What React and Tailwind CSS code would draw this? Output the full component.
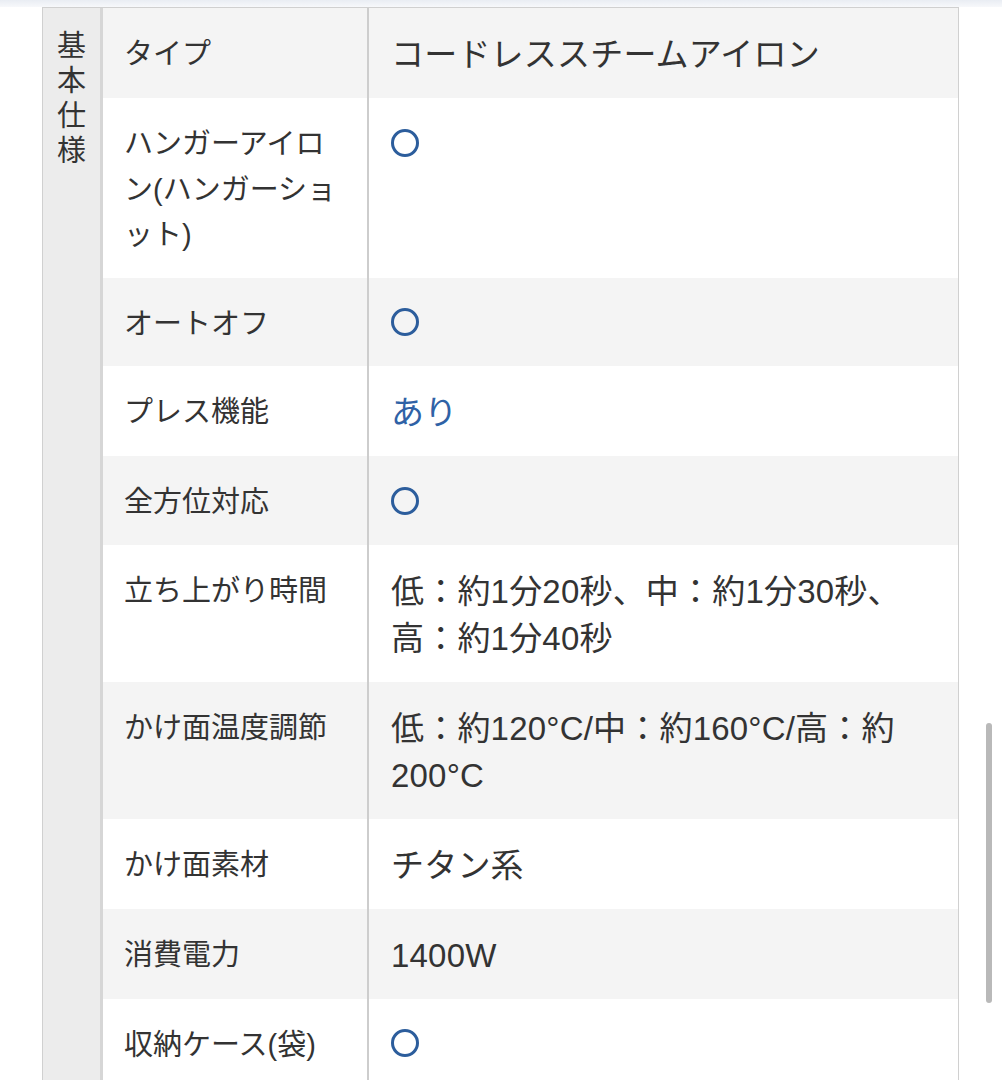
import React from "react";

const rows = [
  { label: "タイプ", value: "コードレススチームアイロン" },
  { label: ["ハンガーアイロ", "ン(ハンガーショ", "ット)"], value: "circle" },
  { label: "オートオフ", value: "circle" },
  { label: "プレス機能", value: "あり", blue: true },
  { label: "全方位対応", value: "circle" },
  { label: "立ち上がり時間", value: ["低：約1分20秒、中：約1分30秒、", "高：約1分40秒"] },
  { label: "かけ面温度調節", value: ["低：約120°C/中：約160°C/高：約", "200°C"] },
  { label: "かけ面素材", value: "チタン系" },
  { label: "消費電力", value: "1400W" },
  { label: "収納ケース(袋)", value: "circle" },
];

const Lines = ({ text }) =>
  Array.isArray(text)
    ? text.map((t, i) => <span key={i} className="block">{t}</span>)
    : text;

const Circle = () => (
  <div className="h-[43px] flex items-center">
    <span className="block w-[28px] h-[28px] rounded-full border-[3px] border-[#2c5d9c]" />
  </div>
);

const App = () => {
  return (
    <div
      className="relative min-h-[1080px] bg-white text-[#333] overflow-hidden"
      style={{ fontFamily: '"Liberation Sans", "Noto Sans CJK JP", sans-serif' }}
    >
      {/* header shadow */}
      <div className="h-[7px] bg-gradient-to-b from-[#e9edf3] to-[#f7f8fb]" />

      <table className="ml-[42px] w-[917px] table-fixed border-separate border-spacing-0 border-l border-t border-r border-[#d0d0d0]">
        <colgroup>
          <col className="w-[60px]" />
          <col className="w-[266px]" />
          <col className="w-[589px]" />
        </colgroup>
        <tbody>
          {rows.map((row, i) => {
            const bg = i % 2 === 0 ? "bg-[#f4f4f4]" : "bg-white";
            return (
              <tr key={i}>
                {i === 0 && (
                  <td
                    rowSpan={rows.length}
                    className="align-top bg-[#ececec] border-r-[3px] border-[#d6d6d6] px-[14px] pt-[21px] text-center text-[29px] leading-[35px]"
                  >
                    基本仕様
                  </td>
                )}
                <td
                  className={`${bg} align-top border-r-2 border-[#cdcdcd] pl-[21px] pr-[20px] pt-[24px] pb-[19px] text-[29px] leading-[45.5px] whitespace-nowrap`}
                >
                  <Lines text={row.label} />
                </td>
                <td
                  className={`${bg} align-top pl-[22px] pr-[20px] pt-[23px] pb-[20px] text-[33px] leading-[47px] whitespace-nowrap tracking-[0.2px]`}
                >
                  {row.value === "circle" ? (
                    <Circle />
                  ) : row.blue ? (
                    <span className="text-[#2f62a6]">{row.value}</span>
                  ) : (
                    <Lines text={row.value} />
                  )}
                </td>
              </tr>
            );
          })}
        </tbody>
      </table>

      {/* scrollbar */}
      <div className="absolute left-[986px] top-[723px] w-[6px] h-[280px] rounded-full bg-[#b9b9b9]" />
    </div>
  );
};

export default App;
